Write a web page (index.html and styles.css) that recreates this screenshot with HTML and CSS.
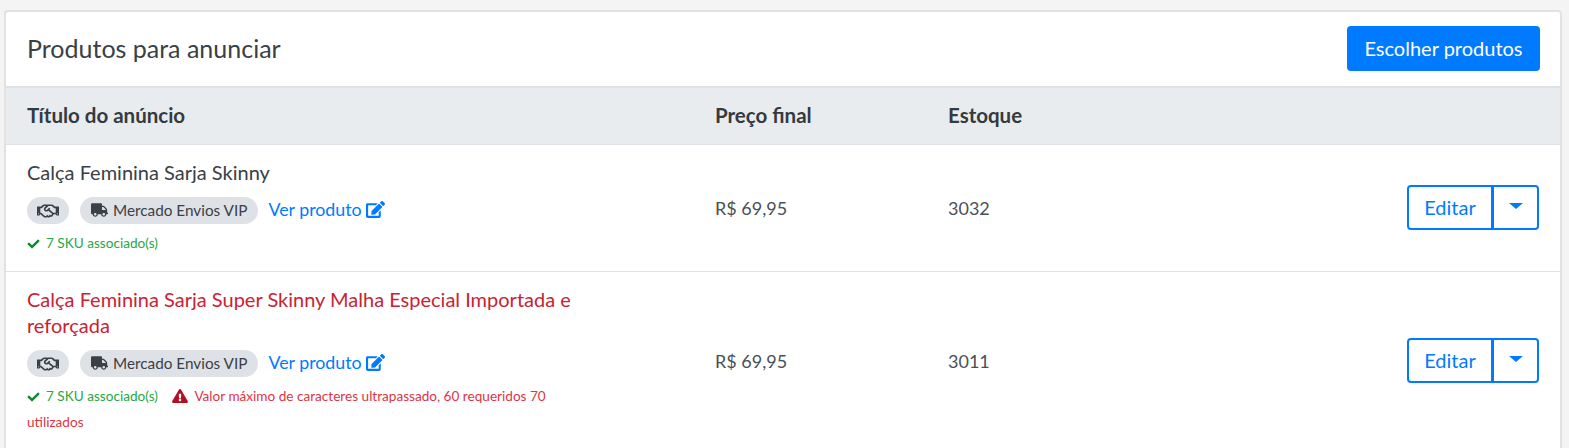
FILE: index.html
```html
<!DOCTYPE html>
<html lang="pt-BR">
<head>
    <meta charset="UTF-8">
    <title>Produtos para anunciar</title>
    <link rel="stylesheet" href="styles.css">
</head>
<body>
    <svg class="icon-defs" width="0" height="0">
        <symbol id="i-handshake" viewBox="0 0 640 512">
            <path fill="currentColor" d="M519.2 127.9l-47.6-47.6A56.252 56.252 0 0 0 432 64H205.2c-14.8 0-29.1 5.9-39.6 16.3L118 127.9H0v255.7h64c17.6 0 31.8-14.2 31.9-31.7h9.1l84.6 76.4c30.9 25.1 73.8 25.7 105.6 3.8 12.5 10.8 26 15.9 41.1 15.9 18.2 0 35.3-7.4 48.8-24 22.1 8.7 48.2 2.6 64-16.8l26.2-32.3c5.6-6.9 9.1-14.8 10.9-23h57.9c.1 17.5 14.4 31.7 31.9 31.7h64V127.9H519.2zM48 351.6c-8.8 0-16-7.2-16-16s7.2-16 16-16 16 7.2 16 16c0 8.9-7.2 16-16 16zm390-6.900l-26.100 32.200c-2.800 3.400-7.800 4-11.300 1.200l-23.900-19.400-30 36.500c-6 7.300-15 4.800-18 2.400l-36.800-31.500-15.600 19.200c-13.900 17.100-39.200 19.700-55.300 6.600l-97.300-88H96V175.800h41.900l61.700-61.600c2-.8 3.700-1.500 5.700-2.300H262l-38.700 35.500c-29.400 26.900-31.100 72.300-4.400 101.300 14.800 16.200 61.200 41.200 101.500 4.400l8.200-7.500 108.200 87.800c3.400 2.800 3.900 7.900 1.200 11.300zm106-40.800h-69.200c-2.300-2.800-4.900-5.400-7.700-7.700l-102.700-83.400 12.500-11.400c6.500-6 7-16.100 1-22.600L367 167.100c-6-6.500-16.100-6.900-22.600-1l-55.200 50.600c-9.500 8.700-25.700 9.400-34.600 0-9.300-9.900-8.500-25.100 1.200-33.900l65.600-60.100c7.400-6.800 17-10.500 27-10.500l83.700-.2c2.100 0 4.100.8 5.500 2.300l61.700 61.600H544v128zm48 47.700c-8.800 0-16-7.200-16-16s7.200-16 16-16 16 7.200 16 16c0 8.900-7.200 16-16 16z"/>
        </symbol>
        <symbol id="i-truck" viewBox="0 0 640 512">
            <path fill="currentColor" d="M624 352h-16V243.900c0-12.700-5.100-24.900-14.100-33.900L494 110.100c-9-9-21.200-14.100-33.900-14.100H416V48c0-26.500-21.500-48-48-48H48C21.500 0 0 21.500 0 48v320c0 26.500 21.500 48 48 48h16c0 53 43 96 96 96s96-43 96-96h128c0 53 43 96 96 96s96-43 96-96h48c8.800 0 16-7.200 16-16v-32c0-8.800-7.200-16-16-16zM160 464c-26.500 0-48-21.500-48-48s21.500-48 48-48 48 21.500 48 48-21.500 48-48 48zm320 0c-26.500 0-48-21.500-48-48s21.500-48 48-48 48 21.500 48 48-21.500 48-48 48zm80-208H416V144h44.100l99.900 99.900V256z"/>
        </symbol>
        <symbol id="i-edit" viewBox="0 0 576 512">
            <path fill="currentColor" d="M402.600 83.200l90.200 90.200c3.800 3.800 3.800 10 0 13.800L274.400 405.600l-92.800 10.300c-12.400 1.400-22.900-9.100-21.500-21.500l10.300-92.800L388.800 83.200c3.800-3.800 10-3.800 13.800 0zm162-22.900l-48.800-48.800c-15.200-15.200-39.900-15.200-55.200 0l-35.400 35.400c-3.800 3.800-3.800 10 0 13.800l90.200 90.200c3.800 3.800 10 3.800 13.800 0l35.400-35.400c15.200-15.300 15.200-40 0-55.200zM384 346.200V448H64V128h229.800c3.200 0 6.200-1.300 8.500-3.500l40-40c7.600-7.600 2.200-20.500-8.500-20.500H48C21.500 64 0 85.500 0 112v352c0 26.500 21.500 48 48 48h352c26.500 0 48-21.500 48-48V306.200c0-10.700-12.900-16-20.500-8.500l-40 40c-2.200 2.300-3.500 5.300-3.500 8.500z"/>
        </symbol>
        <symbol id="i-check" viewBox="0 0 512 512">
            <path fill="currentColor" d="M173.900 439.400l-166.400-166.400c-10-10-10-26.200 0-36.200l36.200-36.200c10-10 26.200-10 36.200 0L192 312.700 432.100 72.600c10-10 26.200-10 36.200 0l36.200 36.200c10 10 10 26.200 0 36.200L210.100 439.400c-10 10-26.200 10-36.200 0z"/>
        </symbol>
        <symbol id="i-warning" viewBox="0 0 576 512">
            <path fill="currentColor" d="M569.500 440C588 472 564.800 512 527.900 512H48.100c-37 0-60.100-40-41.600-72L246.400 24c18.500-32 64.700-32 83.200 0l239.900 416zM288 354c-25.400 0-46 20.600-46 46s20.600 46 46 46 46-20.600 46-46-20.600-46-46-46zm-43.700-165.300l7.400 136c.3 6.400 5.600 11.300 12 11.300h48.500c6.400 0 11.600-5 12-11.300l7.400-136c.4-6.900-5.100-12.700-12-12.700h-63.400c-6.900 0-12.400 5.800-12 12.700z"/>
        </symbol>
    </svg>

    <div class="card">
        <div class="card-header">
            <h2>Produtos para anunciar</h2>
            <button class="btn-primary">Escolher produtos</button>
        </div>

        <div class="row row-head">
            <div class="col-title">Título do anúncio</div>
            <div class="col-price">Preço final</div>
            <div class="col-stock">Estoque</div>
        </div>

        <div class="row row-item">
            <div class="col-title">
                <div class="item-name">Calça Feminina Sarja Skinny</div>
                <div class="item-tags">
                    <span class="pill pill-icon"><svg class="ico-hands"><use href="#i-handshake"/></svg></span>
                    <span class="pill"><svg class="ico-truck"><use href="#i-truck"/></svg>Mercado Envios VIP</span>
                    <a class="item-link" href="#">Ver produto <svg class="ico-edit"><use href="#i-edit"/></svg></a>
                </div>
                <div class="item-notes">
                    <span class="note-ok"><svg class="ico-check"><use href="#i-check"/></svg>7 SKU associado(s)</span>
                </div>
            </div>
            <div class="col-price">R$ 69,95</div>
            <div class="col-stock">3032</div>
            <div class="col-actions">
                <button class="btn-edit">Editar</button><button class="btn-caret"><span class="caret"></span></button>
            </div>
        </div>

        <div class="row row-item">
            <div class="col-title">
                <div class="item-name item-name-error">Calça Feminina Sarja Super Skinny Malha Especial Importada e reforçada</div>
                <div class="item-tags">
                    <span class="pill pill-icon"><svg class="ico-hands"><use href="#i-handshake"/></svg></span>
                    <span class="pill"><svg class="ico-truck"><use href="#i-truck"/></svg>Mercado Envios VIP</span>
                    <a class="item-link" href="#">Ver produto <svg class="ico-edit"><use href="#i-edit"/></svg></a>
                </div>
                <div class="item-notes">
                    <span class="note-ok"><svg class="ico-check"><use href="#i-check"/></svg>7 SKU associado(s)</span>
                    <span class="note-error"><svg class="ico-warning"><use href="#i-warning"/></svg>Valor máximo de caracteres ultrapassado, 60 requeridos 70 utilizados</span>
                </div>
            </div>
            <div class="col-price">R$ 69,95</div>
            <div class="col-stock">3011</div>
            <div class="col-actions">
                <button class="btn-edit">Editar</button><button class="btn-caret"><span class="caret"></span></button>
            </div>
        </div>
    </div>
</body>
</html>
```

FILE: styles.css
```css
* {
    box-sizing: border-box;
}
html, body {
    height: 448px;
    overflow: hidden;
}
body {
    margin: 0;
    padding: 10px 7px 0 4px;
    background-color: #f4f4f4;
    font-family: Lato, "Open Sans", sans-serif;
    color: #3a4046;
}
.icon-defs {
    position: absolute;
}
.card {
    background-color: #fff;
    border: 2px solid #e2e2e2;
    border-radius: 4px;
}
.card-header {
    display: flex;
    justify-content: space-between;
    align-items: center;
    height: 76px;
    padding: 0 20px 2px 21px;
    border-bottom: 2px solid #dee2e6;
}
.card-header h2 {
    margin: 0;
    font-size: 25px;
    font-weight: 400;
}
.btn-primary {
    width: 193px;
    height: 45px;
    border: none;
    border-radius: 4px;
    background-color: #007bff;
    color: #fff;
    font-family: inherit;
    font-size: 20px;
}
.row {
    display: flex;
    padding: 0 21px 0 21px;
}
.row-head {
    align-items: center;
    height: 57px;
    padding-bottom: 2px;
    background-color: #e9ecef;
    border-bottom: 1px solid #dee2e6;
    font-size: 20.5px;
    font-weight: 700;
    color: #343a40;
}
.row-item {
    align-items: center;
    border-bottom: 1px solid #dee2e6;
    padding-top: 14px;
    padding-bottom: 15px;
}
.col-title {
    width: 688px;
    padding-right: 120px;
}
.col-price {
    width: 233px;
}
.col-stock {
    width: 120px;
}
.row-item .col-price,
.row-item .col-stock {
    font-size: 18px;
    color: #495057;
}
.col-actions {
    display: flex;
    margin-left: auto;
}
.item-name {
    font-size: 20px;
    line-height: 26px;
}
.item-name-error {
    color: #c82333;
}
.item-tags {
    display: flex;
    align-items: center;
    margin-top: 12px;
}
.pill {
    display: flex;
    align-items: center;
    height: 27px;
    margin-right: 10px;
    padding: 0 11px 1px;
    border-radius: 14px;
    background-color: #dee2e6;
    font-size: 15.3px;
}
.pill-icon {
    margin-right: 11px;
    padding: 0 10px;
}
.item-link {
    margin-bottom: 3px;
    color: #007bff;
    font-size: 17.8px;
    text-decoration: none;
}
.item-notes {
    margin-top: 6px;
    font-size: 13.6px;
    line-height: 26px;
}
.note-ok {
    margin-right: 11px;
    color: #28a745;
}
.note-error {
    color: #dc3545;
}
.ico-hands {
    display: block;
    width: 22px;
    height: 18px;
}
.ico-truck {
    width: 17px;
    height: 14px;
    margin-right: 5px;
}
.ico-edit {
    width: 19px;
    height: 17px;
    vertical-align: -2px;
}
.ico-check {
    width: 13px;
    height: 12px;
    margin-right: 6px;
    vertical-align: -2px;
    color: #0c8a2c;
}
.ico-warning {
    width: 16px;
    height: 14px;
    margin-right: 6px;
    vertical-align: -2px;
    color: #b30f20;
}
.btn-edit,
.btn-caret {
    height: 45px;
    padding-bottom: 3px;
    border: 2px solid #007bff;
    background-color: #fff;
    color: #007bff;
    font-family: inherit;
    font-size: 20px;
}
.btn-edit {
    width: 86px;
    border-radius: 4px 0 0 4px;
}
.btn-caret {
    width: 47px;
    margin-left: -1px;
    padding-bottom: 0;
    border-radius: 0 4px 4px 0;
}
.caret {
    display: block;
    margin: -4px auto 0;
    width: 0;
    border-top: 6px solid #007bff;
    border-left: 7px solid transparent;
    border-right: 7px solid transparent;
}
```
